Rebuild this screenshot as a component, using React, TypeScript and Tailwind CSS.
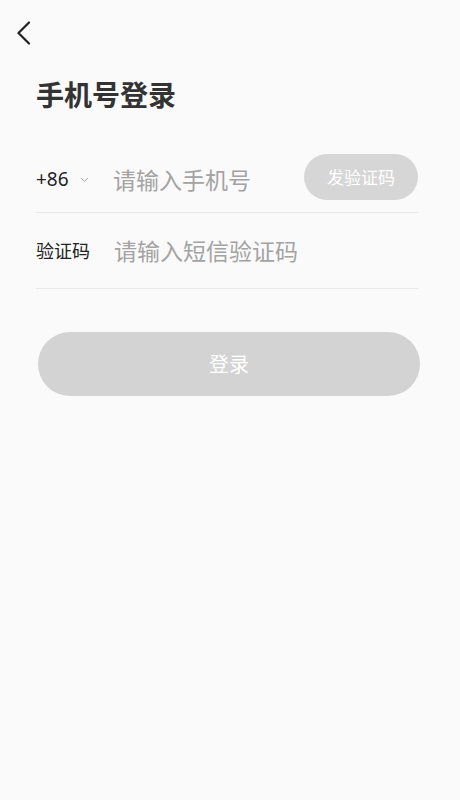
import { useState } from 'react';

const FONT = { fontFamily: '"Noto Sans CJK SC", "Noto Sans", sans-serif' };

export default function App() {
  const [phone, setPhone] = useState('');
  const [code, setCode] = useState('');
  const ready = phone.length === 11 && code.length > 0;

  return (
    <div className="min-h-[800px] w-full bg-[#fafafa] text-[#333]" style={FONT}>
      {/* 顶部返回 */}
      <div className="h-[76px] pl-[16px] pt-[21px]">
        <button className="block">
          <svg width="16" height="24" viewBox="0 0 16 24" fill="none">
            <path d="M13 1.5L2.5 12L13 22.5" stroke="#222" strokeWidth="2.2" strokeLinecap="round" strokeLinejoin="round" />
          </svg>
        </button>
      </div>

      <div className="pl-[36px] pr-[42px]">
        <h1 className="text-[28px] font-bold leading-[36px] text-[#333]">手机号登录</h1>

        {/* 手机号 */}
        <div className="mt-[35px] flex h-[66px] items-center border-b border-[#e8e8e8]">
          <div className="flex w-[77px] shrink-0 items-center">
            <span className="text-[19px] text-[#222]" style={{ fontFamily: '"Noto Sans", sans-serif' }}>+86</span>
            <svg className="ml-[11px] mt-[1px]" width="9" height="6" viewBox="0 0 9 6" fill="none">
              <path d="M1 1L4.5 4.5L8 1" stroke="#aaa" strokeWidth="1" />
            </svg>
          </div>
          <input
            className="min-w-0 flex-1 bg-transparent text-[23px] text-[#333] outline-none placeholder:text-[#a3a3a3]"
            placeholder="请输入手机号"
            value={phone}
            onChange={(e) => setPhone(e.target.value)}
          />
          <button className="mb-[6px] h-[46px] w-[114px] shrink-0 rounded-full bg-[#d6d6d6] text-[17px] text-white">
            发验证码
          </button>
        </div>

        {/* 验证码 */}
        <div className="flex h-[76px] items-center border-b border-[#e8e8e8]">
          <span className="w-[78px] shrink-0 text-[18px] text-[#222]">验证码</span>
          <input
            className="min-w-0 flex-1 bg-transparent text-[23px] text-[#333] outline-none placeholder:text-[#a3a3a3]"
            placeholder="请输入短信验证码"
            value={code}
            onChange={(e) => setCode(e.target.value)}
          />
        </div>

        {/* 登录按钮 */}
        <button
          className={`mt-[43px] ml-[2px] h-[64px] w-[382px] rounded-full text-[20px] text-white ${ready ? 'bg-[#e8412b]' : 'bg-[#d3d3d3]'}`}
        >
          登录
        </button>
      </div>
    </div>
  );
}
